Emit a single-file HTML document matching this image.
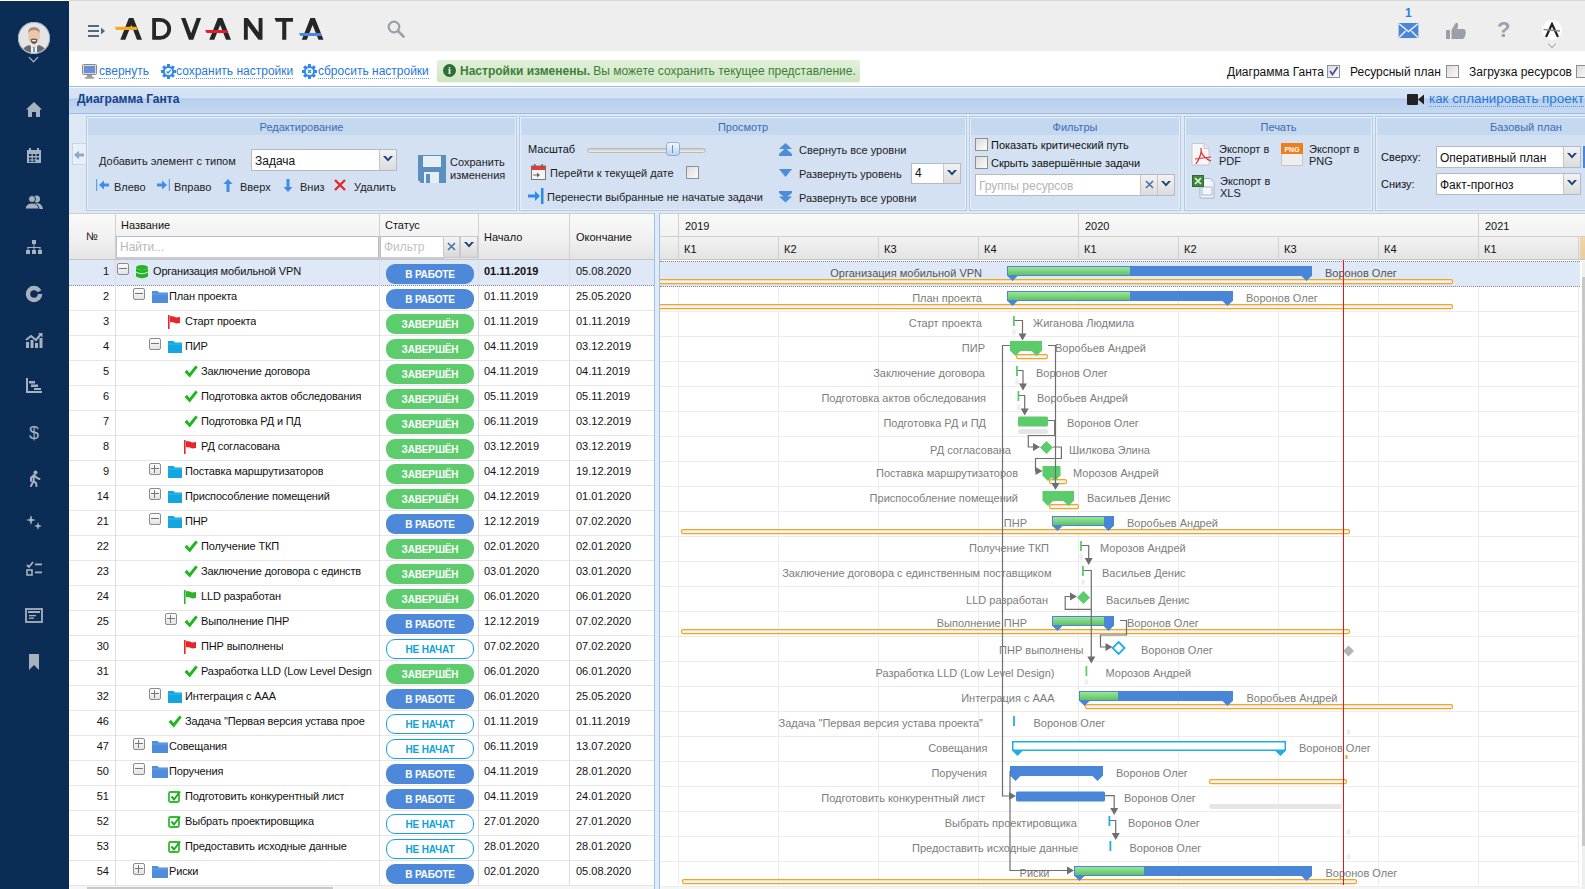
<!DOCTYPE html><html><head><meta charset="utf-8"><style>
*{box-sizing:border-box}
html,body{margin:0;padding:0}
body{width:1585px;height:889px;overflow:hidden;position:relative;background:#fff;font-family:"Liberation Sans",sans-serif;font-size:11px;color:#000}
.a{position:absolute}
.t{position:absolute;white-space:nowrap;line-height:13px}
#sb{left:0;top:1px;width:69px;height:888px;background:#0b2d55}
#hdr{left:69px;top:0;width:1516px;height:51px;background:#eeeeee;border-top:1px solid #d6d6d6}
#lnk{left:69px;top:51px;width:1516px;height:35px;background:#fff}
.lk{color:#1f7ad6;font-size:12px;border-bottom:1px dotted #5b9be0;line-height:13px}
#ttl{left:69px;top:86px;width:1516px;height:28px;border-top:1px solid #99bbe8;border-bottom:1px solid #99bbe8;background:linear-gradient(#f4f8fd 0,#f4f8fd 1px,#d6e4f5 1px,#d3e2f4 11px,#a9c6ec 12px,#b9cfee 13px,#c6d9f0 100%)}
#rib{left:69px;top:114px;width:1516px;height:99px;background:#dfe8f5}
.grp{position:absolute;top:2px;height:95px;border:1px solid #b5c9e3;background:#d3e1f3;box-shadow:inset 0 0 0 1px #e6eef8}
.gh{position:absolute;left:1px;right:1px;top:1px;height:17px;background:#c4d8ef;color:#3d6bb5;text-align:center;line-height:19px;font-size:11px}
.cb{position:absolute;width:13px;height:13px;border:1px solid #8f8f8f;background:linear-gradient(135deg,#dcdcdc,#fbfbfb)}
.sel{position:absolute;background:#fff;border:1px solid #b5b8c8;height:21px}
.dd{position:absolute;right:0;top:0;bottom:0;width:17px;border-left:1px solid #c6c6c6;background:linear-gradient(#f2f2f2,#dcdcdc)}
.dd svg{position:absolute;left:3px;top:6px}
#gh{left:69px;top:213px;width:1516px;height:47px;background:linear-gradient(#fafafa,#e3e3e3);border-top:1px solid #c8c8c8;border-bottom:1px solid #c8c8c8}
.row{position:absolute;left:69px;width:585px;height:25px;border-bottom:1px solid #ececec}
.pill{position:absolute;left:317px;top:4px;width:88px;height:20px;border-radius:9px;color:#fff;font-weight:bold;font-size:10px;text-align:center;line-height:22px;letter-spacing:-0.15px}
.p1{background:#4d88d9}
.p2{background:#5dcc6d}
.p3{background:#fff;border:1.5px solid #14a3dc;color:#119fd8;line-height:19px}
.gtxt{position:absolute;white-space:nowrap;color:#7a7a7a;line-height:13px}
</style></head><body><div id="sb" class="a"><svg class="a" style="left:18px;top:21px" width="32" height="32" viewBox="0 0 32 32"><defs><clipPath id="avc"><circle cx="16" cy="16" r="15"/></clipPath></defs><circle cx="16" cy="16" r="15.5" fill="#dcdcdc" stroke="#a9b6c8" stroke-width="1.5"/><g clip-path="url(#avc)"><rect x="0" y="0" width="32" height="32" fill="#e4e4e4"/><path d="M3 32 Q4 25 11 23 L16 26 L21 23 Q28 25 29 32 Z" fill="#6b6b6b"/><path d="M13 23 L16 27 L19 23 L19 32 L13 32 Z" fill="#f2f2f2"/><rect x="15" y="25" width="2" height="5" fill="#7aa0b8"/><ellipse cx="16" cy="14" rx="6" ry="8" fill="#e8c8aa"/><path d="M10 11 Q10 5 16 5 Q22 5 22 11 Q20 8 16 8 Q12 8 10 11 Z" fill="#a88c78"/><path d="M12.5 17.5 Q16 15.5 19.5 17.5 Q19 21.5 16 22 Q13 21.5 12.5 17.5 Z" fill="#6a5248"/><path d="M13.5 18.3 Q16 17.3 18.5 18.3 Q17.5 19.5 16 19.5 Q14.5 19.5 13.5 18.3 Z" fill="#f4f0ec"/></g></svg><div class="a" style="left:30px;top:53px;width:7px;height:7px;border-right:1.5px solid #c0c8d4;border-bottom:1.5px solid #c0c8d4;transform:rotate(45deg)"></div><svg class="a" style="left:25px;top:100px" width="18" height="18" viewBox="0 0 18 18"><path d="M9 1 L1 8.5 L3 8.5 L3 16 L7 16 L7 11 L11 11 L11 16 L15 16 L15 8.5 L17 8.5 Z" fill="#a7b2c0"/></svg><svg class="a" style="left:25px;top:146px" width="18" height="18" viewBox="0 0 18 18"><rect x="2" y="3" width="14" height="13" fill="#a7b2c0"/><rect x="4" y="1" width="2" height="4" fill="#a7b2c0"/><rect x="12" y="1" width="2" height="4" fill="#a7b2c0"/><g fill="#0b2d55"><rect x="4" y="7" width="2.5" height="2"/><rect x="7.8" y="7" width="2.5" height="2"/><rect x="11.5" y="7" width="2.5" height="2"/><rect x="4" y="10.5" width="2.5" height="2"/><rect x="7.8" y="10.5" width="2.5" height="2"/><rect x="11.5" y="10.5" width="2.5" height="2"/><rect x="4" y="13.5" width="2.5" height="1.5"/><rect x="7.8" y="13.5" width="2.5" height="1.5"/></g></svg><svg class="a" style="left:25px;top:192px" width="18" height="18" viewBox="0 0 18 18"><circle cx="11.5" cy="6" r="3.5" fill="#a7b2c0"/><path d="M5 16 Q6 10 11.5 10 Q17 10 18 16 Z" fill="#a7b2c0"/><circle cx="7" cy="6" r="3.5" fill="#a7b2c0" stroke="#0b2d55" stroke-width="1"/><path d="M0 16 Q1 10 7 10 Q13 10 14 16 Z" fill="#a7b2c0" stroke="#0b2d55" stroke-width="1"/></svg><svg class="a" style="left:25px;top:238px" width="18" height="18" viewBox="0 0 18 18"><rect x="7" y="1" width="4" height="4" fill="#a7b2c0"/><rect x="8.5" y="5" width="1" height="3" fill="#a7b2c0"/><rect x="2.5" y="8" width="13" height="1" fill="#a7b2c0"/><rect x="2.5" y="8" width="1" height="3" fill="#a7b2c0"/><rect x="8.5" y="8" width="1" height="3" fill="#a7b2c0"/><rect x="14.5" y="8" width="1" height="3" fill="#a7b2c0"/><rect x="1" y="11" width="4" height="4" fill="#a7b2c0"/><rect x="7" y="11" width="4" height="4" fill="#a7b2c0"/><rect x="13" y="11" width="4" height="4" fill="#a7b2c0"/></svg><svg class="a" style="left:25px;top:284px" width="18" height="18" viewBox="0 0 18 18"><circle cx="9" cy="9" r="6" fill="none" stroke="#a7b2c0" stroke-width="4.5"/><path d="M9 9 L17 5 L17 9 Z" fill="#0b2d55"/></svg><svg class="a" style="left:25px;top:331px" width="18" height="18" viewBox="0 0 18 18"><rect x="1" y="10" width="3" height="6" fill="#a7b2c0"/><rect x="5.5" y="8" width="3" height="8" fill="#a7b2c0"/><rect x="10" y="11" width="3" height="5" fill="#a7b2c0"/><rect x="14.5" y="6" width="3" height="10" fill="#a7b2c0"/><path d="M1 8 L6 4 L11 8 L16 2" stroke="#a7b2c0" stroke-width="2" fill="none"/><path d="M13 1 L17.5 1 L17.5 5.5 Z" fill="#a7b2c0"/></svg><svg class="a" style="left:25px;top:376px" width="18" height="18" viewBox="0 0 18 18"><rect x="1" y="1" width="2" height="15" fill="#a7b2c0"/><rect x="1" y="14" width="16" height="2" fill="#a7b2c0"/><rect x="4" y="4" width="6" height="2.5" fill="#a7b2c0"/><rect x="6" y="7.5" width="7" height="2.5" fill="#a7b2c0"/><rect x="9" y="11" width="7" height="2" fill="#a7b2c0"/></svg><svg class="a" style="left:25px;top:422px" width="18" height="18" viewBox="0 0 18 18"><text x="9" y="15.5" font-family="Liberation Sans" font-size="18" fill="#a7b2c0" text-anchor="middle">$</text></svg><svg class="a" style="left:25px;top:469px" width="18" height="18" viewBox="0 0 18 18"><circle cx="10.5" cy="2.5" r="2" fill="#a7b2c0"/><path d="M9 5 L6 8 L6 11 M9 5 L12 8 L14.5 9 M9 5 L8.5 11 L6 16 M8.5 11 L11 13 L11.5 16" stroke="#a7b2c0" stroke-width="2" fill="none" stroke-linecap="round"/></svg><svg class="a" style="left:25px;top:513px" width="18" height="18" viewBox="0 0 18 18"><path d="M6 1 L7.3 5 L11 6 L7.3 7 L6 11 L4.7 7 L1 6 L4.7 5 Z" fill="#a7b2c0"/><path d="M13 8 L14 11 L17 12 L14 13 L13 16 L12 13 L9 12 L12 11 Z" fill="#a7b2c0"/></svg><svg class="a" style="left:25px;top:559px" width="18" height="18" viewBox="0 0 18 18"><path d="M2 5 L4 7 L8 2" stroke="#a7b2c0" stroke-width="1.8" fill="none"/><rect x="10" y="3.5" width="7" height="1.8" fill="#a7b2c0"/><rect x="2" y="10" width="5" height="5" fill="none" stroke="#a7b2c0" stroke-width="1.6"/><rect x="10" y="11.5" width="7" height="1.8" fill="#a7b2c0"/></svg><svg class="a" style="left:25px;top:606px" width="18" height="18" viewBox="0 0 18 18"><rect x="1" y="2" width="16" height="13" fill="none" stroke="#a7b2c0" stroke-width="1.8"/><rect x="3" y="4" width="12" height="2" fill="#a7b2c0"/><rect x="4" y="8" width="7" height="1.3" fill="#a7b2c0"/><rect x="4" y="10.5" width="5" height="1.3" fill="#a7b2c0"/></svg><svg class="a" style="left:25px;top:652px" width="18" height="18" viewBox="0 0 18 18"><path d="M4 1 L14 1 L14 17 L9 12 L4 17 Z" fill="#a7b2c0"/></svg></div><div id="hdr" class="a"><svg class="a" style="left:19px;top:23px" width="18" height="15" viewBox="0 0 18 15"><g fill="#4f6a82"><rect x="0" y="1" width="11" height="2"/><rect x="0" y="6" width="11" height="2"/><rect x="0" y="11" width="11" height="2"/><path d="M13 3.5 L17 7 L13 10.5 Z"/></g></svg><svg class="a" style="left:318px;top:19px" width="18" height="18" viewBox="0 0 18 18"><circle cx="7" cy="7" r="5.3" fill="none" stroke="#9aa0a8" stroke-width="2.2"/><path d="M11 11 L16.5 16.5" stroke="#9aa0a8" stroke-width="2.6" stroke-linecap="round"/></svg><div class="t" style="left:1336px;top:6px;color:#2b82d9;font-weight:bold;font-size:12px">1</div><svg class="a" style="left:1329px;top:22px" width="21" height="16" viewBox="0 0 21 17"><rect x="0" y="0" width="21" height="16" fill="#4a86d8"/><path d="M0.5 0.8 L10.5 9 L20.5 0.8" stroke="#eeeeee" stroke-width="1.6" fill="none"/><path d="M0.5 15.5 L7.5 8.5 M20.5 15.5 L13.5 8.5" stroke="#eeeeee" stroke-width="1.6"/></svg><svg class="a" style="left:1377px;top:21px" width="21" height="18" viewBox="0 0 21 18"><g fill="#9aa0aa"><rect x="0" y="8" width="4" height="9" rx="0.5"/><path d="M5.5 8 L9 2 Q10 0 11.5 1 Q12.5 2 12 4.5 L11.2 7 L18 7 Q20 7.5 19.5 9.5 Q20.5 11 19.3 12.3 Q20 14 18.5 15 Q18.8 17 16.5 17 L5.5 17 Z"/></g></svg><div class="t" style="left:1428px;top:18px;color:#9aa0aa;font-weight:bold;font-size:22px;line-height:22px">?</div><div class="a" style="left:1473px;top:19px;width:20px;height:20px;border-radius:50%;background:#fff"></div><svg class="a" style="left:1474px;top:21px" width="18" height="16" viewBox="0 0 18 16"><path d="M3 15 L9 2 L15 15" stroke="#222" stroke-width="2.2" fill="none"/><path d="M0.5 7.5 L17 9" stroke="#888" stroke-width="1.3"/></svg><div class="a" style="left:1480px;top:40px;width:6px;height:6px;border-right:1px solid #aaa;border-bottom:1px solid #aaa;transform:rotate(45deg)"></div></div><svg class="a" style="left:0;top:0" width="340" height="50" viewBox="0 0 340 50"><path d="M120.3,39.7 L128.9,18.0 L133.4,18.0 L142.0,39.7 L137.0,39.7 L131.2,24.9 L125.3,39.7 Z" fill="#262626"/><path d="M209.3,39.7 L217.9,18.0 L222.4,18.0 L231.0,39.7 L226.0,39.7 L220.2,24.9 L214.3,39.7 Z" fill="#262626"/><path d="M301.8,39.7 L310.4,18.0 L314.9,18.0 L323.5,39.7 L318.5,39.7 L312.6,24.9 L306.8,39.7 Z" fill="#262626"/><path d="M152.2,18 L160,18 A10.9,10.9 0 0 1 171.1,28.9 A10.9,10.9 0 0 1 160,39.8 L152.2,39.8 Z M156,21.8 L160,21.8 A7.1,7.1 0 0 1 167.3,28.9 A7.1,7.1 0 0 1 160,36 L156,36 Z" fill="#262626" fill-rule="evenodd"/><path d="M181.0,18.0 L185.4,18.0 L191.1,33.2 L196.7,18.0 L201.1,18.0 L193.3,39.8 L188.9,39.8 Z" fill="#262626"/><path d="M243.9,39.8 L243.9,18.0 L247.9,18.0 L258.6,32.3 L258.6,18.0 L262.5,18.0 L262.5,39.8 L258.5,39.8 L247.8,25.4 L247.8,39.8 Z" fill="#262626"/><path d="M274.5,18.0 L293.0,18.0 L293.0,21.8 L276.0,21.8 Z" fill="#262626"/><path d="M282.2,21.0 L286.3,21.0 L286.3,39.8 L282.2,39.8 Z" fill="#262626"/><path d="M114.9,26.8 L136.6,26.8 L137.3,29.9 L116.2,29.9 Z" fill="#f5ab1b"/><path d="M205.2,30.0 L227.3,30.0 L228.0,32.9 L206.5,32.9 Z" fill="#e8192a"/><path d="M299.0,33.1 L321.0,33.1 L321.8,36.0 L300.3,36.0 Z" fill="#4a88dc"/></svg><div class="a" style="left:69px;top:51px;width:1516px;height:35px;background:#fff"></div><svg class="a" style="left:82px;top:64px" width="15" height="15" viewBox="0 0 15 15"><rect x="0.5" y="0.5" width="14" height="10" rx="1" fill="#d8d8d8" stroke="#8a8a8a"/><rect x="2" y="2" width="11" height="7" fill="#6a8fd8"/><rect x="5" y="11" width="5" height="2" fill="#9a9a9a"/><rect x="3" y="13" width="9" height="1.6" rx="0.8" fill="#b0b0b0" stroke="#8a8a8a" stroke-width="0.5"/></svg><div class="t lk" style="left:99px;top:65px">свернуть</div><svg class="a" style="left:161px;top:64px" width="15" height="15" viewBox="0 0 15 15"><g fill="#2f8ae8"><circle cx="7.5" cy="7.5" r="5.6"/><rect x="6" y="0" width="3" height="3" transform="rotate(0 7.5 7.5)"/><rect x="6" y="0" width="3" height="3" transform="rotate(45 7.5 7.5)"/><rect x="6" y="0" width="3" height="3" transform="rotate(90 7.5 7.5)"/><rect x="6" y="0" width="3" height="3" transform="rotate(135 7.5 7.5)"/><rect x="6" y="0" width="3" height="3" transform="rotate(180 7.5 7.5)"/><rect x="6" y="0" width="3" height="3" transform="rotate(225 7.5 7.5)"/><rect x="6" y="0" width="3" height="3" transform="rotate(270 7.5 7.5)"/><rect x="6" y="0" width="3" height="3" transform="rotate(315 7.5 7.5)"/></g><circle cx="7.5" cy="7.5" r="3.6" fill="#fff"/><path d="M5.5 7.6 L7 9 L9.6 6" stroke="#2f8ae8" stroke-width="1.3" fill="none"/></svg><div class="t lk" style="left:176px;top:65px">сохранить настройки</div><svg class="a" style="left:302px;top:64px" width="15" height="15" viewBox="0 0 15 15"><g fill="#2f8ae8"><circle cx="7.5" cy="7.5" r="5.6"/><rect x="6" y="0" width="3" height="3" transform="rotate(0 7.5 7.5)"/><rect x="6" y="0" width="3" height="3" transform="rotate(45 7.5 7.5)"/><rect x="6" y="0" width="3" height="3" transform="rotate(90 7.5 7.5)"/><rect x="6" y="0" width="3" height="3" transform="rotate(135 7.5 7.5)"/><rect x="6" y="0" width="3" height="3" transform="rotate(180 7.5 7.5)"/><rect x="6" y="0" width="3" height="3" transform="rotate(225 7.5 7.5)"/><rect x="6" y="0" width="3" height="3" transform="rotate(270 7.5 7.5)"/><rect x="6" y="0" width="3" height="3" transform="rotate(315 7.5 7.5)"/></g><circle cx="7.5" cy="7.5" r="3.6" fill="#fff"/><path d="M6 6 L9 9 M9 6 L6 9" stroke="#2f8ae8" stroke-width="1.3"/></svg><div class="t lk" style="left:318px;top:65px">сбросить настройки</div><div class="a" style="left:437px;top:60px;width:423px;height:22px;border-radius:2px;background:linear-gradient(#e2f1da,#cde6c2);box-shadow:0 1px 1px rgba(0,0,0,0.06)"></div><div class="a" style="left:443px;top:64px;width:13px;height:13px;border-radius:50%;background:#2e6e38;color:#fff;font-weight:bold;font-size:10px;line-height:13px;text-align:center;font-family:'Liberation Serif'">i</div><div class="t" style="left:460px;top:65px;font-size:12px;color:#3e7d3a"><b>Настройки изменены.</b> Вы можете сохранить текущее представление.</div><div class="t" style="left:1227px;top:66px;font-size:12px;color:#111">Диаграмма Ганта</div><div class="cb" style="left:1327px;top:65px;background:linear-gradient(135deg,#dcdcdc,#fbfbfb)"></div><svg class="a" style="left:1327px;top:65px" width="13" height="13"><path d="M3 6 L5.5 9.5 L10.5 2" stroke="#3b4aa8" stroke-width="1.6" fill="none"/></svg><div class="t" style="left:1350px;top:66px;font-size:12px;color:#111">Ресурсный план</div><div class="cb" style="left:1446px;top:65px;background:linear-gradient(135deg,#dcdcdc,#fbfbfb)"></div><div class="t" style="left:1469px;top:66px;font-size:12px;color:#111">Загрузка ресурсов</div><div class="cb" style="left:1576px;top:65px;background:linear-gradient(135deg,#dcdcdc,#fbfbfb)"></div><div id="ttl" class="a"></div><div class="t" style="left:77px;top:93px;font-size:12px;font-weight:bold;color:#15428b">Диаграмма Ганта</div><svg class="a" style="left:1407px;top:94px" width="17" height="11" viewBox="0 0 17 11"><rect x="0" y="0" width="11" height="11" rx="1" fill="#222"/><path d="M11 5.5 L17 0.5 L17 10.5 Z" fill="#222"/></svg><div class="t lk" style="left:1429px;top:92px;font-size:13.4px;line-height:14px">как спланировать проект</div><div id="rib" class="a"></div><div class="a" style="left:72px;top:143px;width:14px;height:22px;background:#e8eff8;border:1px solid #c8d6ea;border-right:none"></div><svg class="a" style="left:74px;top:150px" width="10" height="10" viewBox="0 0 10 10"><path d="M0 5 L5 0.5 L5 3.5 L10 3.5 L10 6.5 L5 6.5 L5 9.5 Z" fill="#8fa9cc"/></svg><div class="grp" style="left:86px;top:116px;width:431px;height:95px"><div class="gh">Редактирование</div></div><div class="grp" style="left:519px;top:116px;width:448px;height:95px"><div class="gh">Просмотр</div></div><div class="grp" style="left:969px;top:116px;width:212px;height:95px"><div class="gh">Фильтры</div></div><div class="grp" style="left:1184px;top:116px;width:189px;height:95px"><div class="gh">Печать</div></div><div class="grp" style="left:1375px;top:116px;width:302px;height:95px"><div class="gh">Базовый план</div></div><div class="t" style="left:99px;top:155px;color:#222">Добавить элемент с типом</div><div class="sel" style="left:251px;top:149px;width:146px;height:22px"><div class="t" style="left:3px;top:5px;font-size:12px;color:#111">Задача</div><div class="dd"><svg width="10" height="6" viewBox="0 0 10 6"><path d="M0 0 L2.6 0 L5 2.8 L7.4 0 L10 0 L5 5.6 Z" fill="#1d3f7e"/></svg></div></div><svg class="a" style="left:96px;top:179px" width="14" height="12" viewBox="0 0 14 12"><rect x="0" y="0" width="1.2" height="12" fill="#5fa0e6"/><path d="M3 6 L8 1.5 L8 4.5 L13 4.5 L13 7.5 L8 7.5 L8 10.5 Z" fill="#3d8ee6"/></svg><div class="t" style="left:114px;top:181px;color:#222">Влево</div><svg class="a" style="left:156px;top:179px" width="14" height="12" viewBox="0 0 14 12"><rect x="12.8" y="0" width="1.2" height="12" fill="#5fa0e6"/><path d="M11 6 L6 1.5 L6 4.5 L1 4.5 L1 7.5 L6 7.5 L6 10.5 Z" fill="#3d8ee6"/></svg><div class="t" style="left:174px;top:181px;color:#222">Вправо</div><svg class="a" style="left:223px;top:179px" width="10" height="13" viewBox="0 0 10 13"><path d="M5 0 L9.5 5 L6.5 5 L6.5 13 L3.5 13 L3.5 5 L0.5 5 Z" fill="#3d8ee6"/></svg><div class="t" style="left:240px;top:181px;color:#222">Вверх</div><svg class="a" style="left:283px;top:179px" width="10" height="13" viewBox="0 0 10 13"><path d="M5 13 L9.5 8 L6.5 8 L6.5 0 L3.5 0 L3.5 8 L0.5 8 Z" fill="#3d8ee6"/></svg><div class="t" style="left:300px;top:181px;color:#222">Вниз</div><svg class="a" style="left:334px;top:179px" width="12" height="12" viewBox="0 0 12 12"><path d="M1 1 L11 11 M11 1 L1 11" stroke="#e02a2a" stroke-width="2.4"/></svg><div class="t" style="left:354px;top:181px;color:#222">Удалить</div><svg class="a" style="left:418px;top:155px" width="28" height="28" viewBox="0 0 28 28"><path d="M0 0 L28 0 L28 28 L3 28 L0 25 Z" fill="#5b8fbf"/><rect x="5" y="1" width="18" height="11" fill="#e6eef6"/><rect x="6" y="17" width="15" height="11" fill="#e6eef6"/><rect x="8" y="19" width="4" height="9" fill="#5b8fbf"/></svg><div class="t" style="left:450px;top:156px;color:#222;line-height:12.5px">Сохранить<br>изменения</div><div class="t" style="left:528px;top:143px;color:#111">Масштаб</div><div class="a" style="left:587px;top:148px;width:119px;height:5px;border-radius:3px;background:linear-gradient(#c9c9c9,#eeeeee);border:1px solid #b9b9b9"></div><div class="a" style="left:666px;top:142px;width:14px;height:14px;border-radius:3px;background:linear-gradient(#f4f8fd,#bcd2ee);border:1px solid #8fb0d8"></div><div class="a" style="left:672px;top:145px;width:1px;height:8px;background:#6f8fb8"></div><svg class="a" style="left:531px;top:164px" width="15" height="16" viewBox="0 0 15 16"><rect x="0.5" y="2" width="14" height="13.5" fill="#f5f5f5" stroke="#777" stroke-width="1"/><rect x="0.5" y="2" width="14" height="4" fill="#e23b3b"/><rect x="3" y="0" width="1.5" height="3.5" fill="#666"/><rect x="10.5" y="0" width="1.5" height="3.5" fill="#666"/><path d="M2 10.5 L6 10.5 L6 8.5 L9 11 L6 13.5 L6 11.5 L2 11.5 Z" fill="#666"/></svg><div class="t" style="left:550px;top:167px;color:#222">Перейти к текущей дате</div><div class="cb" style="left:686px;top:166px;background:linear-gradient(135deg,#dcdcdc,#fbfbfb)"></div><svg class="a" style="left:528px;top:188px" width="16" height="16" viewBox="0 0 16 16"><path d="M0 6.5 L7 6.5 L7 3 L12 8 L7 13 L7 9.5 L0 9.5 Z" fill="#2c8ae8"/><rect x="13" y="0" width="2.5" height="16" fill="#2c8ae8"/></svg><div class="t" style="left:547px;top:191px;color:#222">Перенести выбранные не начатые задачи</div><svg class="a" style="left:779px;top:143px" width="13" height="13" viewBox="0 0 13 13"><path d="M6.5 0 L13 6 L0 6 Z M6.5 5 L13 11 L0 11 Z" fill="#4d8ed8"/><rect x="0" y="11" width="13" height="2" fill="#4d8ed8"/></svg><div class="t" style="left:799px;top:144px;color:#222">Свернуть все уровни</div><svg class="a" style="left:779px;top:169px" width="13" height="10" viewBox="0 0 13 10"><path d="M0 0 L13 0 L6.5 8 Z" fill="#4d8ed8"/></svg><div class="t" style="left:799px;top:168px;color:#222">Развернуть уровень</div><div class="sel" style="left:911px;top:163px;width:50px;height:21px"><div class="t" style="left:3px;top:3px;font-size:12px;color:#111">4</div><div class="dd"><svg width="10" height="6" viewBox="0 0 10 6"><path d="M0 0 L2.6 0 L5 2.8 L7.4 0 L10 0 L5 5.6 Z" fill="#1d3f7e"/></svg></div></div><svg class="a" style="left:779px;top:191px" width="13" height="12" viewBox="0 0 13 12"><rect x="0" y="0" width="13" height="2" fill="#4d8ed8"/><path d="M0 2 L13 2 L6.5 7 Z M0 5.5 L13 5.5 L6.5 11.5 Z" fill="#4d8ed8"/></svg><div class="t" style="left:799px;top:192px;color:#222">Развернуть все уровни</div><div class="cb" style="left:975px;top:138px;background:linear-gradient(135deg,#dcdcdc,#fbfbfb)"></div><div class="t" style="left:991px;top:139px;color:#111">Показать критический путь</div><div class="cb" style="left:975px;top:156px;background:linear-gradient(135deg,#dcdcdc,#fbfbfb)"></div><div class="t" style="left:991px;top:157px;color:#111">Скрыть завершённые задачи</div><div class="sel" style="left:975px;top:174px;width:200px;height:22px"><div class="t" style="left:3px;top:5px;font-size:12px;color:#b4b4b4">Группы ресурсов</div><div class="a" style="right:17px;top:0;bottom:0;width:17px;border-left:1px solid #c6c6c6;background:linear-gradient(#f2f2f2,#dcdcdc)"></div><div class="dd"><svg width="10" height="6" viewBox="0 0 10 6"><path d="M0 0 L2.6 0 L5 2.8 L7.4 0 L10 0 L5 5.6 Z" fill="#1d3f7e"/></svg></div></div><svg class="a" style="left:1145px;top:180px" width="9" height="9"><path d="M1 1 L8 8 M8 1 L1 8" stroke="#4a6fa8" stroke-width="1.6"/></svg><svg class="a" style="left:1191px;top:143px" width="22" height="23" viewBox="0 0 22 23"><path d="M1 0.5 L13 0.5 L18 5.5 L18 22 L1 22 Z" fill="#f7f7f7" stroke="#c8c8c8"/><path d="M13 0.5 L13 5.5 L18 5.5" fill="#e6e6e6" stroke="#c8c8c8"/><path d="M10 5 Q11 12 5 21 M10 8 Q12 15 20 18 M4 16 L20 14" stroke="#e03030" stroke-width="1.2" fill="none"/></svg><div class="t" style="left:1219px;top:143px;color:#222;line-height:12px">Экспорт в<br>PDF</div><svg class="a" style="left:1281px;top:143px" width="22" height="23" viewBox="0 0 22 23"><rect x="0.5" y="10" width="21" height="12.5" fill="#eeeeee" stroke="#c8c8c8"/><rect x="0" y="0" width="22" height="11" fill="#f07c1c"/><text x="11" y="8.5" font-family="Liberation Sans" font-size="7" font-weight="bold" fill="#fff" text-anchor="middle">PNG</text></svg><div class="t" style="left:1309px;top:143px;color:#222;line-height:12px">Экспорт в<br>PNG</div><svg class="a" style="left:1192px;top:175px" width="24" height="24" viewBox="0 0 24 24"><path d="M8 3.5 L18 3.5 L22 7.5 L22 23 L8 23 Z" fill="#f4f8fc" stroke="#a0b4cc"/><rect x="10" y="12" width="10" height="8" fill="none" stroke="#8aa6c8" stroke-width="0.8"/><rect x="0.5" y="0.5" width="11" height="11" fill="#3f8a3a" stroke="#2d6b2a"/><path d="M3 3 L9 9 M9 3 L3 9" stroke="#e8f4e0" stroke-width="1.6"/></svg><div class="t" style="left:1220px;top:175px;color:#222;line-height:12px">Экспорт в<br>XLS</div><div class="t" style="left:1381px;top:151px;color:#111">Сверху:</div><div class="sel" style="left:1436px;top:146px;width:145px;height:22px"><div class="t" style="left:3px;top:5px;font-size:12px;color:#111">Оперативный план</div><div class="dd"><svg width="10" height="6" viewBox="0 0 10 6"><path d="M0 0 L2.6 0 L5 2.8 L7.4 0 L10 0 L5 5.6 Z" fill="#1d3f7e"/></svg></div></div><div class="t" style="left:1381px;top:178px;color:#111">Снизу:</div><div class="sel" style="left:1436px;top:173px;width:145px;height:22px"><div class="t" style="left:3px;top:5px;font-size:12px;color:#111">Факт-прогноз</div><div class="dd"><svg width="10" height="6" viewBox="0 0 10 6"><path d="M0 0 L2.6 0 L5 2.8 L7.4 0 L10 0 L5 5.6 Z" fill="#1d3f7e"/></svg></div></div><div class="a" style="left:1583px;top:146px;width:2px;height:22px;background:#4a86d8"></div><div class="a" style="left:69px;top:213px;width:1516px;height:47px;background:linear-gradient(#f9f9f9 0,#f2f2f2 50%,#e4e4e4 100%);border-top:1px solid #cdcdcd;border-bottom:1px solid #c5c5c5"></div><div class="a" style="left:115px;top:214px;width:1px;height:45px;background:#d0d0d0"></div><div class="a" style="left:379px;top:214px;width:1px;height:45px;background:#d0d0d0"></div><div class="a" style="left:478px;top:214px;width:1px;height:45px;background:#d0d0d0"></div><div class="a" style="left:569px;top:214px;width:1px;height:45px;background:#d0d0d0"></div><div class="t" style="left:69px;width:46px;text-align:center;top:230px;color:#111">№</div><div class="t" style="left:121px;top:219px;color:#111">Название</div><div class="a" style="left:116px;top:236px;width:263px;height:23px;background:#fff;border:1px solid #b9bccb;border-bottom:2px solid #c8cad4"></div><div class="t" style="left:120px;top:241px;font-size:12px;color:#b8b8b8">Найти...</div><div class="t" style="left:385px;top:219px;color:#111">Статус</div><div class="a" style="left:380px;top:236px;width:64px;height:23px;background:#fff;border:1px solid #b9bccb;border-bottom:2px solid #c8cad4"></div><div class="t" style="left:384px;top:241px;font-size:12px;color:#c2c2c2">Фильтр</div><div class="a" style="left:443px;top:236px;width:17px;height:22px;background:linear-gradient(#f4f4f4,#d8d8d8);border:1px solid #c9c9c9"></div><svg class="a" style="left:447px;top:242px" width="9" height="9"><path d="M1 1 L8 8 M8 1 L1 8" stroke="#4a6fa8" stroke-width="1.6"/></svg><div class="a" style="left:460px;top:236px;width:18px;height:22px;background:linear-gradient(#f4f4f4,#d8d8d8);border:1px solid #c9c9c9"></div><svg class="a" style="left:464px;top:242px" width="10" height="6" viewBox="0 0 10 6"><path d="M0 0 L2.6 0 L5 2.8 L7.4 0 L10 0 L5 5.6 Z" fill="#1d3f7e"/></svg><div class="t" style="left:484px;top:231px;color:#111">Начало</div><div class="t" style="left:576px;top:231px;color:#111">Окончание</div><div class="a" style="left:654px;top:213px;width:6px;height:676px;background:#e3ebf7;border-left:1.5px solid #9cc0ec;border-right:1.5px solid #9cc0ec"></div><div class="a" style="left:660px;top:236px;width:925px;height:1px;background:#d0d0d0"></div><div class="a" style="left:678px;top:214px;width:1px;height:46px;background:#d0d0d0"></div><div class="a" style="left:1078px;top:214px;width:1px;height:46px;background:#d0d0d0"></div><div class="a" style="left:1478px;top:214px;width:1px;height:46px;background:#d0d0d0"></div><div class="a" style="left:778px;top:237px;width:1px;height:23px;background:#d0d0d0"></div><div class="a" style="left:878px;top:237px;width:1px;height:23px;background:#d0d0d0"></div><div class="a" style="left:978px;top:237px;width:1px;height:23px;background:#d0d0d0"></div><div class="a" style="left:1178px;top:237px;width:1px;height:23px;background:#d0d0d0"></div><div class="a" style="left:1278px;top:237px;width:1px;height:23px;background:#d0d0d0"></div><div class="a" style="left:1378px;top:237px;width:1px;height:23px;background:#d0d0d0"></div><div class="a" style="left:1578px;top:237px;width:1px;height:23px;background:#d0d0d0"></div><div class="t" style="left:685px;top:220px;color:#111">2019</div><div class="t" style="left:1085px;top:220px;color:#111">2020</div><div class="t" style="left:1485px;top:220px;color:#111">2021</div><div class="t" style="left:684px;top:243px;color:#111">К1</div><div class="t" style="left:784px;top:243px;color:#111">К2</div><div class="t" style="left:884px;top:243px;color:#111">К3</div><div class="t" style="left:984px;top:243px;color:#111">К4</div><div class="t" style="left:1084px;top:243px;color:#111">К1</div><div class="t" style="left:1184px;top:243px;color:#111">К2</div><div class="t" style="left:1284px;top:243px;color:#111">К3</div><div class="t" style="left:1384px;top:243px;color:#111">К4</div><div class="t" style="left:1484px;top:243px;color:#111">К1</div><div class="a" style="left:1580px;top:237px;width:5px;height:22px;background:#f0a020;opacity:0.35"></div><div class="a" style="left:69px;top:260px;width:585px;height:26px;background:#dfe8f6;border-bottom:1px dotted #8a8a8a"></div><div class="a" style="left:115px;top:260px;width:1px;height:25px;background:#dcdcdc"></div><div class="a" style="left:379px;top:260px;width:1px;height:25px;background:#dcdcdc"></div><div class="a" style="left:478px;top:260px;width:1px;height:25px;background:#dcdcdc"></div><div class="a" style="left:569px;top:260px;width:1px;height:25px;background:#dcdcdc"></div><div class="t" style="left:69px;width:40px;text-align:right;top:265px;color:#111">1</div><div class="a" style="left:117px;top:263px;width:12px;height:12px;border:1px solid #8c8c8c;border-radius:2px;background:linear-gradient(#fdfdfd,#e4e4e4)"></div><div class="a" style="left:119px;top:268px;width:8px;height:1px;background:#777"></div><svg class="a" style="left:136px;top:265px" width="12" height="14" viewBox="0 0 12 14"><g fill="#22b522"><ellipse cx="6" cy="2.5" rx="6" ry="2.5"/><path d="M0 3.5 Q6 7 12 3.5 L12 6.5 Q6 10 0 6.5 Z"/><path d="M0 7.5 Q6 11 12 7.5 L12 11.5 Q6 15 0 11.5 Z"/></g></svg><div class="t" style="left:153px;top:265px;color:#111;letter-spacing:-0.15px;max-width:222px;overflow:hidden">Организация мобильной VPN</div><div class="pill p1" style="left:386px;top:264px">В РАБОТЕ</div><div class="t" style="left:484px;top:265px;color:#111;font-weight:bold">01.11.2019</div><div class="t" style="left:576px;top:265px;color:#111">05.08.2020</div><div class="a" style="left:69px;top:310px;width:585px;height:1px;background:#e6e6e6"></div><div class="a" style="left:115px;top:285px;width:1px;height:25px;background:#dcdcdc"></div><div class="a" style="left:379px;top:285px;width:1px;height:25px;background:#dcdcdc"></div><div class="a" style="left:478px;top:285px;width:1px;height:25px;background:#dcdcdc"></div><div class="a" style="left:569px;top:285px;width:1px;height:25px;background:#dcdcdc"></div><div class="t" style="left:69px;width:40px;text-align:right;top:290px;color:#111">2</div><div class="a" style="left:133px;top:288px;width:12px;height:12px;border:1px solid #8c8c8c;border-radius:2px;background:linear-gradient(#fdfdfd,#e4e4e4)"></div><div class="a" style="left:135px;top:293px;width:8px;height:1px;background:#777"></div><svg class="a" style="left:152px;top:290px" width="16" height="13" viewBox="0 0 16 13"><path d="M0 1 L5.5 1 L7 2.5 L16 2.5 L16 13 L0 13 Z" fill="#4d8ddc"/><rect x="0" y="3.5" width="16" height="1" fill="#6aa3e6"/></svg><div class="t" style="left:169px;top:290px;color:#111;letter-spacing:-0.15px;max-width:206px;overflow:hidden">План проекта</div><div class="pill p1" style="left:386px;top:289px">В РАБОТЕ</div><div class="t" style="left:484px;top:290px;color:#111;font-weight:normal">01.11.2019</div><div class="t" style="left:576px;top:290px;color:#111">25.05.2020</div><div class="a" style="left:69px;top:335px;width:585px;height:1px;background:#e6e6e6"></div><div class="a" style="left:115px;top:310px;width:1px;height:25px;background:#dcdcdc"></div><div class="a" style="left:379px;top:310px;width:1px;height:25px;background:#dcdcdc"></div><div class="a" style="left:478px;top:310px;width:1px;height:25px;background:#dcdcdc"></div><div class="a" style="left:569px;top:310px;width:1px;height:25px;background:#dcdcdc"></div><div class="t" style="left:69px;width:40px;text-align:right;top:315px;color:#111">3</div><svg class="a" style="left:168px;top:315px" width="13" height="14" viewBox="0 0 13 14"><rect x="0" y="0" width="1.6" height="14" fill="#e8252b"/><path d="M2 1 L6 1.5 L8 2.5 L12 2 L12 8 L8 8.5 L6 7.5 L2 7 Z" fill="#e8252b"/></svg><div class="t" style="left:185px;top:315px;color:#111;letter-spacing:-0.15px;max-width:190px;overflow:hidden">Старт проекта</div><div class="pill p2" style="left:386px;top:314px">ЗАВЕРШЁН</div><div class="t" style="left:484px;top:315px;color:#111;font-weight:normal">01.11.2019</div><div class="t" style="left:576px;top:315px;color:#111">01.11.2019</div><div class="a" style="left:69px;top:360px;width:585px;height:1px;background:#e6e6e6"></div><div class="a" style="left:115px;top:335px;width:1px;height:25px;background:#dcdcdc"></div><div class="a" style="left:379px;top:335px;width:1px;height:25px;background:#dcdcdc"></div><div class="a" style="left:478px;top:335px;width:1px;height:25px;background:#dcdcdc"></div><div class="a" style="left:569px;top:335px;width:1px;height:25px;background:#dcdcdc"></div><div class="t" style="left:69px;width:40px;text-align:right;top:340px;color:#111">4</div><div class="a" style="left:149px;top:338px;width:12px;height:12px;border:1px solid #8c8c8c;border-radius:2px;background:linear-gradient(#fdfdfd,#e4e4e4)"></div><div class="a" style="left:151px;top:343px;width:8px;height:1px;background:#777"></div><svg class="a" style="left:168px;top:340px" width="14" height="13" viewBox="0 0 14 13"><path d="M0 1 L5.5 1 L7 2.5 L14 2.5 L14 13 L0 13 Z" fill="#14a6de"/><rect x="0" y="3.5" width="14" height="1" fill="#3ab8e8"/></svg><div class="t" style="left:185px;top:340px;color:#111;letter-spacing:-0.15px;max-width:190px;overflow:hidden">ПИР</div><div class="pill p2" style="left:386px;top:339px">ЗАВЕРШЁН</div><div class="t" style="left:484px;top:340px;color:#111;font-weight:normal">04.11.2019</div><div class="t" style="left:576px;top:340px;color:#111">03.12.2019</div><div class="a" style="left:69px;top:385px;width:585px;height:1px;background:#e6e6e6"></div><div class="a" style="left:115px;top:360px;width:1px;height:25px;background:#dcdcdc"></div><div class="a" style="left:379px;top:360px;width:1px;height:25px;background:#dcdcdc"></div><div class="a" style="left:478px;top:360px;width:1px;height:25px;background:#dcdcdc"></div><div class="a" style="left:569px;top:360px;width:1px;height:25px;background:#dcdcdc"></div><div class="t" style="left:69px;width:40px;text-align:right;top:365px;color:#111">5</div><svg class="a" style="left:184px;top:365px" width="14" height="13" viewBox="0 0 14 13"><path d="M0.5 7 L3 4.8 L5.5 8 L11.5 0.5 L13.8 2.2 L5.8 12.5 Z" fill="#22b522"/></svg><div class="t" style="left:201px;top:365px;color:#111;letter-spacing:-0.15px;max-width:174px;overflow:hidden">Заключение договора</div><div class="pill p2" style="left:386px;top:364px">ЗАВЕРШЁН</div><div class="t" style="left:484px;top:365px;color:#111;font-weight:normal">04.11.2019</div><div class="t" style="left:576px;top:365px;color:#111">04.11.2019</div><div class="a" style="left:69px;top:410px;width:585px;height:1px;background:#e6e6e6"></div><div class="a" style="left:115px;top:385px;width:1px;height:25px;background:#dcdcdc"></div><div class="a" style="left:379px;top:385px;width:1px;height:25px;background:#dcdcdc"></div><div class="a" style="left:478px;top:385px;width:1px;height:25px;background:#dcdcdc"></div><div class="a" style="left:569px;top:385px;width:1px;height:25px;background:#dcdcdc"></div><div class="t" style="left:69px;width:40px;text-align:right;top:390px;color:#111">6</div><svg class="a" style="left:184px;top:390px" width="14" height="13" viewBox="0 0 14 13"><path d="M0.5 7 L3 4.8 L5.5 8 L11.5 0.5 L13.8 2.2 L5.8 12.5 Z" fill="#22b522"/></svg><div class="t" style="left:201px;top:390px;color:#111;letter-spacing:-0.15px;max-width:174px;overflow:hidden">Подготовка актов обследования</div><div class="pill p2" style="left:386px;top:389px">ЗАВЕРШЁН</div><div class="t" style="left:484px;top:390px;color:#111;font-weight:normal">05.11.2019</div><div class="t" style="left:576px;top:390px;color:#111">05.11.2019</div><div class="a" style="left:69px;top:435px;width:585px;height:1px;background:#e6e6e6"></div><div class="a" style="left:115px;top:410px;width:1px;height:25px;background:#dcdcdc"></div><div class="a" style="left:379px;top:410px;width:1px;height:25px;background:#dcdcdc"></div><div class="a" style="left:478px;top:410px;width:1px;height:25px;background:#dcdcdc"></div><div class="a" style="left:569px;top:410px;width:1px;height:25px;background:#dcdcdc"></div><div class="t" style="left:69px;width:40px;text-align:right;top:415px;color:#111">7</div><svg class="a" style="left:184px;top:415px" width="14" height="13" viewBox="0 0 14 13"><path d="M0.5 7 L3 4.8 L5.5 8 L11.5 0.5 L13.8 2.2 L5.8 12.5 Z" fill="#22b522"/></svg><div class="t" style="left:201px;top:415px;color:#111;letter-spacing:-0.15px;max-width:174px;overflow:hidden">Подготовка РД и ПД</div><div class="pill p2" style="left:386px;top:414px">ЗАВЕРШЁН</div><div class="t" style="left:484px;top:415px;color:#111;font-weight:normal">06.11.2019</div><div class="t" style="left:576px;top:415px;color:#111">03.12.2019</div><div class="a" style="left:69px;top:460px;width:585px;height:1px;background:#e6e6e6"></div><div class="a" style="left:115px;top:435px;width:1px;height:25px;background:#dcdcdc"></div><div class="a" style="left:379px;top:435px;width:1px;height:25px;background:#dcdcdc"></div><div class="a" style="left:478px;top:435px;width:1px;height:25px;background:#dcdcdc"></div><div class="a" style="left:569px;top:435px;width:1px;height:25px;background:#dcdcdc"></div><div class="t" style="left:69px;width:40px;text-align:right;top:440px;color:#111">8</div><svg class="a" style="left:184px;top:440px" width="13" height="14" viewBox="0 0 13 14"><rect x="0" y="0" width="1.6" height="14" fill="#e8252b"/><path d="M2 1 L6 1.5 L8 2.5 L12 2 L12 8 L8 8.5 L6 7.5 L2 7 Z" fill="#e8252b"/></svg><div class="t" style="left:201px;top:440px;color:#111;letter-spacing:-0.15px;max-width:174px;overflow:hidden">РД согласована</div><div class="pill p2" style="left:386px;top:439px">ЗАВЕРШЁН</div><div class="t" style="left:484px;top:440px;color:#111;font-weight:normal">03.12.2019</div><div class="t" style="left:576px;top:440px;color:#111">03.12.2019</div><div class="a" style="left:69px;top:485px;width:585px;height:1px;background:#e6e6e6"></div><div class="a" style="left:115px;top:460px;width:1px;height:25px;background:#dcdcdc"></div><div class="a" style="left:379px;top:460px;width:1px;height:25px;background:#dcdcdc"></div><div class="a" style="left:478px;top:460px;width:1px;height:25px;background:#dcdcdc"></div><div class="a" style="left:569px;top:460px;width:1px;height:25px;background:#dcdcdc"></div><div class="t" style="left:69px;width:40px;text-align:right;top:465px;color:#111">9</div><div class="a" style="left:149px;top:463px;width:12px;height:12px;border:1px solid #8c8c8c;border-radius:2px;background:linear-gradient(#fdfdfd,#e4e4e4)"></div><div class="a" style="left:151px;top:468px;width:8px;height:1px;background:#777"></div><div class="a" style="left:154px;top:465px;width:1px;height:8px;background:#777"></div><svg class="a" style="left:168px;top:465px" width="14" height="13" viewBox="0 0 14 13"><path d="M0 1 L5.5 1 L7 2.5 L14 2.5 L14 13 L0 13 Z" fill="#14a6de"/><rect x="0" y="3.5" width="14" height="1" fill="#3ab8e8"/></svg><div class="t" style="left:185px;top:465px;color:#111;letter-spacing:-0.15px;max-width:190px;overflow:hidden">Поставка маршрутизаторов</div><div class="pill p2" style="left:386px;top:464px">ЗАВЕРШЁН</div><div class="t" style="left:484px;top:465px;color:#111;font-weight:normal">04.12.2019</div><div class="t" style="left:576px;top:465px;color:#111">19.12.2019</div><div class="a" style="left:69px;top:510px;width:585px;height:1px;background:#e6e6e6"></div><div class="a" style="left:115px;top:485px;width:1px;height:25px;background:#dcdcdc"></div><div class="a" style="left:379px;top:485px;width:1px;height:25px;background:#dcdcdc"></div><div class="a" style="left:478px;top:485px;width:1px;height:25px;background:#dcdcdc"></div><div class="a" style="left:569px;top:485px;width:1px;height:25px;background:#dcdcdc"></div><div class="t" style="left:69px;width:40px;text-align:right;top:490px;color:#111">14</div><div class="a" style="left:149px;top:488px;width:12px;height:12px;border:1px solid #8c8c8c;border-radius:2px;background:linear-gradient(#fdfdfd,#e4e4e4)"></div><div class="a" style="left:151px;top:493px;width:8px;height:1px;background:#777"></div><div class="a" style="left:154px;top:490px;width:1px;height:8px;background:#777"></div><svg class="a" style="left:168px;top:490px" width="14" height="13" viewBox="0 0 14 13"><path d="M0 1 L5.5 1 L7 2.5 L14 2.5 L14 13 L0 13 Z" fill="#14a6de"/><rect x="0" y="3.5" width="14" height="1" fill="#3ab8e8"/></svg><div class="t" style="left:185px;top:490px;color:#111;letter-spacing:-0.15px;max-width:190px;overflow:hidden">Приспособление помещений</div><div class="pill p2" style="left:386px;top:489px">ЗАВЕРШЁН</div><div class="t" style="left:484px;top:490px;color:#111;font-weight:normal">04.12.2019</div><div class="t" style="left:576px;top:490px;color:#111">01.01.2020</div><div class="a" style="left:69px;top:535px;width:585px;height:1px;background:#e6e6e6"></div><div class="a" style="left:115px;top:510px;width:1px;height:25px;background:#dcdcdc"></div><div class="a" style="left:379px;top:510px;width:1px;height:25px;background:#dcdcdc"></div><div class="a" style="left:478px;top:510px;width:1px;height:25px;background:#dcdcdc"></div><div class="a" style="left:569px;top:510px;width:1px;height:25px;background:#dcdcdc"></div><div class="t" style="left:69px;width:40px;text-align:right;top:515px;color:#111">21</div><div class="a" style="left:149px;top:513px;width:12px;height:12px;border:1px solid #8c8c8c;border-radius:2px;background:linear-gradient(#fdfdfd,#e4e4e4)"></div><div class="a" style="left:151px;top:518px;width:8px;height:1px;background:#777"></div><svg class="a" style="left:168px;top:515px" width="14" height="13" viewBox="0 0 14 13"><path d="M0 1 L5.5 1 L7 2.5 L14 2.5 L14 13 L0 13 Z" fill="#14a6de"/><rect x="0" y="3.5" width="14" height="1" fill="#3ab8e8"/></svg><div class="t" style="left:185px;top:515px;color:#111;letter-spacing:-0.15px;max-width:190px;overflow:hidden">ПНР</div><div class="pill p1" style="left:386px;top:514px">В РАБОТЕ</div><div class="t" style="left:484px;top:515px;color:#111;font-weight:normal">12.12.2019</div><div class="t" style="left:576px;top:515px;color:#111">07.02.2020</div><div class="a" style="left:69px;top:560px;width:585px;height:1px;background:#e6e6e6"></div><div class="a" style="left:115px;top:535px;width:1px;height:25px;background:#dcdcdc"></div><div class="a" style="left:379px;top:535px;width:1px;height:25px;background:#dcdcdc"></div><div class="a" style="left:478px;top:535px;width:1px;height:25px;background:#dcdcdc"></div><div class="a" style="left:569px;top:535px;width:1px;height:25px;background:#dcdcdc"></div><div class="t" style="left:69px;width:40px;text-align:right;top:540px;color:#111">22</div><svg class="a" style="left:184px;top:540px" width="14" height="13" viewBox="0 0 14 13"><path d="M0.5 7 L3 4.8 L5.5 8 L11.5 0.5 L13.8 2.2 L5.8 12.5 Z" fill="#22b522"/></svg><div class="t" style="left:201px;top:540px;color:#111;letter-spacing:-0.15px;max-width:174px;overflow:hidden">Получение ТКП</div><div class="pill p2" style="left:386px;top:539px">ЗАВЕРШЁН</div><div class="t" style="left:484px;top:540px;color:#111;font-weight:normal">02.01.2020</div><div class="t" style="left:576px;top:540px;color:#111">02.01.2020</div><div class="a" style="left:69px;top:585px;width:585px;height:1px;background:#e6e6e6"></div><div class="a" style="left:115px;top:560px;width:1px;height:25px;background:#dcdcdc"></div><div class="a" style="left:379px;top:560px;width:1px;height:25px;background:#dcdcdc"></div><div class="a" style="left:478px;top:560px;width:1px;height:25px;background:#dcdcdc"></div><div class="a" style="left:569px;top:560px;width:1px;height:25px;background:#dcdcdc"></div><div class="t" style="left:69px;width:40px;text-align:right;top:565px;color:#111">23</div><svg class="a" style="left:184px;top:565px" width="14" height="13" viewBox="0 0 14 13"><path d="M0.5 7 L3 4.8 L5.5 8 L11.5 0.5 L13.8 2.2 L5.8 12.5 Z" fill="#22b522"/></svg><div class="t" style="left:201px;top:565px;color:#111;letter-spacing:-0.15px;max-width:174px;overflow:hidden">Заключение договора с единств</div><div class="pill p2" style="left:386px;top:564px">ЗАВЕРШЁН</div><div class="t" style="left:484px;top:565px;color:#111;font-weight:normal">03.01.2020</div><div class="t" style="left:576px;top:565px;color:#111">03.01.2020</div><div class="a" style="left:69px;top:610px;width:585px;height:1px;background:#e6e6e6"></div><div class="a" style="left:115px;top:585px;width:1px;height:25px;background:#dcdcdc"></div><div class="a" style="left:379px;top:585px;width:1px;height:25px;background:#dcdcdc"></div><div class="a" style="left:478px;top:585px;width:1px;height:25px;background:#dcdcdc"></div><div class="a" style="left:569px;top:585px;width:1px;height:25px;background:#dcdcdc"></div><div class="t" style="left:69px;width:40px;text-align:right;top:590px;color:#111">24</div><svg class="a" style="left:184px;top:590px" width="13" height="14" viewBox="0 0 13 14"><rect x="0" y="0" width="1.6" height="14" fill="#2bb52b"/><path d="M2 1 L6 1.5 L8 2.5 L12 2 L12 8 L8 8.5 L6 7.5 L2 7 Z" fill="#2bb52b"/></svg><div class="t" style="left:201px;top:590px;color:#111;letter-spacing:-0.15px;max-width:174px;overflow:hidden">LLD разработан</div><div class="pill p2" style="left:386px;top:589px">ЗАВЕРШЁН</div><div class="t" style="left:484px;top:590px;color:#111;font-weight:normal">06.01.2020</div><div class="t" style="left:576px;top:590px;color:#111">06.01.2020</div><div class="a" style="left:69px;top:635px;width:585px;height:1px;background:#e6e6e6"></div><div class="a" style="left:115px;top:610px;width:1px;height:25px;background:#dcdcdc"></div><div class="a" style="left:379px;top:610px;width:1px;height:25px;background:#dcdcdc"></div><div class="a" style="left:478px;top:610px;width:1px;height:25px;background:#dcdcdc"></div><div class="a" style="left:569px;top:610px;width:1px;height:25px;background:#dcdcdc"></div><div class="t" style="left:69px;width:40px;text-align:right;top:615px;color:#111">25</div><div class="a" style="left:165px;top:613px;width:12px;height:12px;border:1px solid #8c8c8c;border-radius:2px;background:linear-gradient(#fdfdfd,#e4e4e4)"></div><div class="a" style="left:167px;top:618px;width:8px;height:1px;background:#777"></div><div class="a" style="left:170px;top:615px;width:1px;height:8px;background:#777"></div><svg class="a" style="left:184px;top:615px" width="14" height="13" viewBox="0 0 14 13"><path d="M0.5 7 L3 4.8 L5.5 8 L11.5 0.5 L13.8 2.2 L5.8 12.5 Z" fill="#22b522"/></svg><div class="t" style="left:201px;top:615px;color:#111;letter-spacing:-0.15px;max-width:174px;overflow:hidden">Выполнение ПНР</div><div class="pill p1" style="left:386px;top:614px">В РАБОТЕ</div><div class="t" style="left:484px;top:615px;color:#111;font-weight:normal">12.12.2019</div><div class="t" style="left:576px;top:615px;color:#111">07.02.2020</div><div class="a" style="left:69px;top:660px;width:585px;height:1px;background:#e6e6e6"></div><div class="a" style="left:115px;top:635px;width:1px;height:25px;background:#dcdcdc"></div><div class="a" style="left:379px;top:635px;width:1px;height:25px;background:#dcdcdc"></div><div class="a" style="left:478px;top:635px;width:1px;height:25px;background:#dcdcdc"></div><div class="a" style="left:569px;top:635px;width:1px;height:25px;background:#dcdcdc"></div><div class="t" style="left:69px;width:40px;text-align:right;top:640px;color:#111">30</div><svg class="a" style="left:184px;top:640px" width="13" height="14" viewBox="0 0 13 14"><rect x="0" y="0" width="1.6" height="14" fill="#e8252b"/><path d="M2 1 L6 1.5 L8 2.5 L12 2 L12 8 L8 8.5 L6 7.5 L2 7 Z" fill="#e8252b"/></svg><div class="t" style="left:201px;top:640px;color:#111;letter-spacing:-0.15px;max-width:174px;overflow:hidden">ПНР выполнены</div><div class="pill p3" style="left:386px;top:639px">НЕ НАЧАТ</div><div class="t" style="left:484px;top:640px;color:#111;font-weight:normal">07.02.2020</div><div class="t" style="left:576px;top:640px;color:#111">07.02.2020</div><div class="a" style="left:69px;top:685px;width:585px;height:1px;background:#e6e6e6"></div><div class="a" style="left:115px;top:660px;width:1px;height:25px;background:#dcdcdc"></div><div class="a" style="left:379px;top:660px;width:1px;height:25px;background:#dcdcdc"></div><div class="a" style="left:478px;top:660px;width:1px;height:25px;background:#dcdcdc"></div><div class="a" style="left:569px;top:660px;width:1px;height:25px;background:#dcdcdc"></div><div class="t" style="left:69px;width:40px;text-align:right;top:665px;color:#111">31</div><svg class="a" style="left:184px;top:665px" width="14" height="13" viewBox="0 0 14 13"><path d="M0.5 7 L3 4.8 L5.5 8 L11.5 0.5 L13.8 2.2 L5.8 12.5 Z" fill="#22b522"/></svg><div class="t" style="left:201px;top:665px;color:#111;letter-spacing:-0.15px;max-width:174px;overflow:hidden">Разработка LLD (Low Level Design</div><div class="pill p2" style="left:386px;top:664px">ЗАВЕРШЁН</div><div class="t" style="left:484px;top:665px;color:#111;font-weight:normal">06.01.2020</div><div class="t" style="left:576px;top:665px;color:#111">06.01.2020</div><div class="a" style="left:69px;top:710px;width:585px;height:1px;background:#e6e6e6"></div><div class="a" style="left:115px;top:685px;width:1px;height:25px;background:#dcdcdc"></div><div class="a" style="left:379px;top:685px;width:1px;height:25px;background:#dcdcdc"></div><div class="a" style="left:478px;top:685px;width:1px;height:25px;background:#dcdcdc"></div><div class="a" style="left:569px;top:685px;width:1px;height:25px;background:#dcdcdc"></div><div class="t" style="left:69px;width:40px;text-align:right;top:690px;color:#111">32</div><div class="a" style="left:149px;top:688px;width:12px;height:12px;border:1px solid #8c8c8c;border-radius:2px;background:linear-gradient(#fdfdfd,#e4e4e4)"></div><div class="a" style="left:151px;top:693px;width:8px;height:1px;background:#777"></div><div class="a" style="left:154px;top:690px;width:1px;height:8px;background:#777"></div><svg class="a" style="left:168px;top:690px" width="14" height="13" viewBox="0 0 14 13"><path d="M0 1 L5.5 1 L7 2.5 L14 2.5 L14 13 L0 13 Z" fill="#14a6de"/><rect x="0" y="3.5" width="14" height="1" fill="#3ab8e8"/></svg><div class="t" style="left:185px;top:690px;color:#111;letter-spacing:-0.15px;max-width:190px;overflow:hidden">Интеграция с AAA</div><div class="pill p1" style="left:386px;top:689px">В РАБОТЕ</div><div class="t" style="left:484px;top:690px;color:#111;font-weight:normal">06.01.2020</div><div class="t" style="left:576px;top:690px;color:#111">25.05.2020</div><div class="a" style="left:69px;top:735px;width:585px;height:1px;background:#e6e6e6"></div><div class="a" style="left:115px;top:710px;width:1px;height:25px;background:#dcdcdc"></div><div class="a" style="left:379px;top:710px;width:1px;height:25px;background:#dcdcdc"></div><div class="a" style="left:478px;top:710px;width:1px;height:25px;background:#dcdcdc"></div><div class="a" style="left:569px;top:710px;width:1px;height:25px;background:#dcdcdc"></div><div class="t" style="left:69px;width:40px;text-align:right;top:715px;color:#111">46</div><svg class="a" style="left:168px;top:715px" width="14" height="13" viewBox="0 0 14 13"><path d="M0.5 7 L3 4.8 L5.5 8 L11.5 0.5 L13.8 2.2 L5.8 12.5 Z" fill="#22b522"/></svg><div class="t" style="left:185px;top:715px;color:#111;letter-spacing:-0.15px;max-width:190px;overflow:hidden">Задача &quot;Первая версия устава прое</div><div class="pill p3" style="left:386px;top:714px">НЕ НАЧАТ</div><div class="t" style="left:484px;top:715px;color:#111;font-weight:normal">01.11.2019</div><div class="t" style="left:576px;top:715px;color:#111">01.11.2019</div><div class="a" style="left:69px;top:760px;width:585px;height:1px;background:#e6e6e6"></div><div class="a" style="left:115px;top:735px;width:1px;height:25px;background:#dcdcdc"></div><div class="a" style="left:379px;top:735px;width:1px;height:25px;background:#dcdcdc"></div><div class="a" style="left:478px;top:735px;width:1px;height:25px;background:#dcdcdc"></div><div class="a" style="left:569px;top:735px;width:1px;height:25px;background:#dcdcdc"></div><div class="t" style="left:69px;width:40px;text-align:right;top:740px;color:#111">47</div><div class="a" style="left:133px;top:738px;width:12px;height:12px;border:1px solid #8c8c8c;border-radius:2px;background:linear-gradient(#fdfdfd,#e4e4e4)"></div><div class="a" style="left:135px;top:743px;width:8px;height:1px;background:#777"></div><div class="a" style="left:138px;top:740px;width:1px;height:8px;background:#777"></div><svg class="a" style="left:152px;top:740px" width="16" height="13" viewBox="0 0 16 13"><path d="M0 1 L5.5 1 L7 2.5 L16 2.5 L16 13 L0 13 Z" fill="#4d8ddc"/><rect x="0" y="3.5" width="16" height="1" fill="#6aa3e6"/></svg><div class="t" style="left:169px;top:740px;color:#111;letter-spacing:-0.15px;max-width:206px;overflow:hidden">Совещания</div><div class="pill p3" style="left:386px;top:739px">НЕ НАЧАТ</div><div class="t" style="left:484px;top:740px;color:#111;font-weight:normal">06.11.2019</div><div class="t" style="left:576px;top:740px;color:#111">13.07.2020</div><div class="a" style="left:69px;top:785px;width:585px;height:1px;background:#e6e6e6"></div><div class="a" style="left:115px;top:760px;width:1px;height:25px;background:#dcdcdc"></div><div class="a" style="left:379px;top:760px;width:1px;height:25px;background:#dcdcdc"></div><div class="a" style="left:478px;top:760px;width:1px;height:25px;background:#dcdcdc"></div><div class="a" style="left:569px;top:760px;width:1px;height:25px;background:#dcdcdc"></div><div class="t" style="left:69px;width:40px;text-align:right;top:765px;color:#111">50</div><div class="a" style="left:133px;top:763px;width:12px;height:12px;border:1px solid #8c8c8c;border-radius:2px;background:linear-gradient(#fdfdfd,#e4e4e4)"></div><div class="a" style="left:135px;top:768px;width:8px;height:1px;background:#777"></div><svg class="a" style="left:152px;top:765px" width="16" height="13" viewBox="0 0 16 13"><path d="M0 1 L5.5 1 L7 2.5 L16 2.5 L16 13 L0 13 Z" fill="#4d8ddc"/><rect x="0" y="3.5" width="16" height="1" fill="#6aa3e6"/></svg><div class="t" style="left:169px;top:765px;color:#111;letter-spacing:-0.15px;max-width:206px;overflow:hidden">Поручения</div><div class="pill p1" style="left:386px;top:764px">В РАБОТЕ</div><div class="t" style="left:484px;top:765px;color:#111;font-weight:normal">04.11.2019</div><div class="t" style="left:576px;top:765px;color:#111">28.01.2020</div><div class="a" style="left:69px;top:810px;width:585px;height:1px;background:#e6e6e6"></div><div class="a" style="left:115px;top:785px;width:1px;height:25px;background:#dcdcdc"></div><div class="a" style="left:379px;top:785px;width:1px;height:25px;background:#dcdcdc"></div><div class="a" style="left:478px;top:785px;width:1px;height:25px;background:#dcdcdc"></div><div class="a" style="left:569px;top:785px;width:1px;height:25px;background:#dcdcdc"></div><div class="t" style="left:69px;width:40px;text-align:right;top:790px;color:#111">51</div><svg class="a" style="left:168px;top:790px" width="13" height="13" viewBox="0 0 13 13"><rect x="1" y="2" width="10" height="10" rx="1.5" fill="#fff" stroke="#33bb33" stroke-width="1.8"/><path d="M3.5 6.5 L6 9.5 L12 1.5" stroke="#22aa22" stroke-width="2" fill="none"/></svg><div class="t" style="left:185px;top:790px;color:#111;letter-spacing:-0.15px;max-width:190px;overflow:hidden">Подготовить конкурентный лист</div><div class="pill p1" style="left:386px;top:789px">В РАБОТЕ</div><div class="t" style="left:484px;top:790px;color:#111;font-weight:normal">04.11.2019</div><div class="t" style="left:576px;top:790px;color:#111">24.01.2020</div><div class="a" style="left:69px;top:835px;width:585px;height:1px;background:#e6e6e6"></div><div class="a" style="left:115px;top:810px;width:1px;height:25px;background:#dcdcdc"></div><div class="a" style="left:379px;top:810px;width:1px;height:25px;background:#dcdcdc"></div><div class="a" style="left:478px;top:810px;width:1px;height:25px;background:#dcdcdc"></div><div class="a" style="left:569px;top:810px;width:1px;height:25px;background:#dcdcdc"></div><div class="t" style="left:69px;width:40px;text-align:right;top:815px;color:#111">52</div><svg class="a" style="left:168px;top:815px" width="13" height="13" viewBox="0 0 13 13"><rect x="1" y="2" width="10" height="10" rx="1.5" fill="#fff" stroke="#33bb33" stroke-width="1.8"/><path d="M3.5 6.5 L6 9.5 L12 1.5" stroke="#22aa22" stroke-width="2" fill="none"/></svg><div class="t" style="left:185px;top:815px;color:#111;letter-spacing:-0.15px;max-width:190px;overflow:hidden">Выбрать проектировщика</div><div class="pill p3" style="left:386px;top:814px">НЕ НАЧАТ</div><div class="t" style="left:484px;top:815px;color:#111;font-weight:normal">27.01.2020</div><div class="t" style="left:576px;top:815px;color:#111">27.01.2020</div><div class="a" style="left:69px;top:860px;width:585px;height:1px;background:#e6e6e6"></div><div class="a" style="left:115px;top:835px;width:1px;height:25px;background:#dcdcdc"></div><div class="a" style="left:379px;top:835px;width:1px;height:25px;background:#dcdcdc"></div><div class="a" style="left:478px;top:835px;width:1px;height:25px;background:#dcdcdc"></div><div class="a" style="left:569px;top:835px;width:1px;height:25px;background:#dcdcdc"></div><div class="t" style="left:69px;width:40px;text-align:right;top:840px;color:#111">53</div><svg class="a" style="left:168px;top:840px" width="13" height="13" viewBox="0 0 13 13"><rect x="1" y="2" width="10" height="10" rx="1.5" fill="#fff" stroke="#33bb33" stroke-width="1.8"/><path d="M3.5 6.5 L6 9.5 L12 1.5" stroke="#22aa22" stroke-width="2" fill="none"/></svg><div class="t" style="left:185px;top:840px;color:#111;letter-spacing:-0.15px;max-width:190px;overflow:hidden">Предоставить исходные данные</div><div class="pill p3" style="left:386px;top:839px">НЕ НАЧАТ</div><div class="t" style="left:484px;top:840px;color:#111;font-weight:normal">28.01.2020</div><div class="t" style="left:576px;top:840px;color:#111">28.01.2020</div><div class="a" style="left:69px;top:885px;width:585px;height:1px;background:#e6e6e6"></div><div class="a" style="left:115px;top:860px;width:1px;height:25px;background:#dcdcdc"></div><div class="a" style="left:379px;top:860px;width:1px;height:25px;background:#dcdcdc"></div><div class="a" style="left:478px;top:860px;width:1px;height:25px;background:#dcdcdc"></div><div class="a" style="left:569px;top:860px;width:1px;height:25px;background:#dcdcdc"></div><div class="t" style="left:69px;width:40px;text-align:right;top:865px;color:#111">54</div><div class="a" style="left:133px;top:863px;width:12px;height:12px;border:1px solid #8c8c8c;border-radius:2px;background:linear-gradient(#fdfdfd,#e4e4e4)"></div><div class="a" style="left:135px;top:868px;width:8px;height:1px;background:#777"></div><div class="a" style="left:138px;top:865px;width:1px;height:8px;background:#777"></div><svg class="a" style="left:152px;top:865px" width="16" height="13" viewBox="0 0 16 13"><path d="M0 1 L5.5 1 L7 2.5 L16 2.5 L16 13 L0 13 Z" fill="#4d8ddc"/><rect x="0" y="3.5" width="16" height="1" fill="#6aa3e6"/></svg><div class="t" style="left:169px;top:865px;color:#111;letter-spacing:-0.15px;max-width:206px;overflow:hidden">Риски</div><div class="pill p1" style="left:386px;top:864px">В РАБОТЕ</div><div class="t" style="left:484px;top:865px;color:#111;font-weight:normal">02.01.2020</div><div class="t" style="left:576px;top:865px;color:#111">05.08.2020</div><div class="a" style="left:69px;top:886px;width:585px;height:3px;background:#f6f6f6"></div><div class="a" style="left:87px;top:887px;width:246px;height:2px;background:#c8c8c8"></div><div class="a" style="left:660px;top:261px;width:920px;height:26px;background:#dfe8f6;border-top:1px dotted #8a8a8a;border-bottom:1px dotted #8a8a8a"></div><div class="a" style="left:660px;top:311px;width:920px;height:1px;background:#ececec"></div><div class="a" style="left:660px;top:336px;width:920px;height:1px;background:#ececec"></div><div class="a" style="left:660px;top:361px;width:920px;height:1px;background:#ececec"></div><div class="a" style="left:660px;top:386px;width:920px;height:1px;background:#ececec"></div><div class="a" style="left:660px;top:411px;width:920px;height:1px;background:#ececec"></div><div class="a" style="left:660px;top:436px;width:920px;height:1px;background:#ececec"></div><div class="a" style="left:660px;top:461px;width:920px;height:1px;background:#ececec"></div><div class="a" style="left:660px;top:486px;width:920px;height:1px;background:#ececec"></div><div class="a" style="left:660px;top:511px;width:920px;height:1px;background:#ececec"></div><div class="a" style="left:660px;top:536px;width:920px;height:1px;background:#ececec"></div><div class="a" style="left:660px;top:561px;width:920px;height:1px;background:#ececec"></div><div class="a" style="left:660px;top:586px;width:920px;height:1px;background:#ececec"></div><div class="a" style="left:660px;top:611px;width:920px;height:1px;background:#ececec"></div><div class="a" style="left:660px;top:636px;width:920px;height:1px;background:#ececec"></div><div class="a" style="left:660px;top:661px;width:920px;height:1px;background:#ececec"></div><div class="a" style="left:660px;top:686px;width:920px;height:1px;background:#ececec"></div><div class="a" style="left:660px;top:711px;width:920px;height:1px;background:#ececec"></div><div class="a" style="left:660px;top:736px;width:920px;height:1px;background:#ececec"></div><div class="a" style="left:660px;top:761px;width:920px;height:1px;background:#ececec"></div><div class="a" style="left:660px;top:786px;width:920px;height:1px;background:#ececec"></div><div class="a" style="left:660px;top:811px;width:920px;height:1px;background:#ececec"></div><div class="a" style="left:660px;top:836px;width:920px;height:1px;background:#ececec"></div><div class="a" style="left:660px;top:861px;width:920px;height:1px;background:#ececec"></div><div class="a" style="left:660px;top:886px;width:920px;height:1px;background:#ececec"></div><div class="a" style="left:678px;top:286px;width:1px;height:599px;background:#ececec"></div><div class="a" style="left:678px;top:260px;width:1px;height:1px;background:#ececec"></div><div class="a" style="left:778px;top:286px;width:1px;height:599px;background:#ececec"></div><div class="a" style="left:778px;top:260px;width:1px;height:1px;background:#ececec"></div><div class="a" style="left:878px;top:286px;width:1px;height:599px;background:#ececec"></div><div class="a" style="left:878px;top:260px;width:1px;height:1px;background:#ececec"></div><div class="a" style="left:978px;top:286px;width:1px;height:599px;background:#ececec"></div><div class="a" style="left:978px;top:260px;width:1px;height:1px;background:#ececec"></div><div class="a" style="left:1078px;top:286px;width:1px;height:599px;background:#ececec"></div><div class="a" style="left:1078px;top:260px;width:1px;height:1px;background:#ececec"></div><div class="a" style="left:1178px;top:286px;width:1px;height:599px;background:#ececec"></div><div class="a" style="left:1178px;top:260px;width:1px;height:1px;background:#ececec"></div><div class="a" style="left:1278px;top:286px;width:1px;height:599px;background:#ececec"></div><div class="a" style="left:1278px;top:260px;width:1px;height:1px;background:#ececec"></div><div class="a" style="left:1378px;top:286px;width:1px;height:599px;background:#ececec"></div><div class="a" style="left:1378px;top:260px;width:1px;height:1px;background:#ececec"></div><div class="a" style="left:1478px;top:286px;width:1px;height:599px;background:#ececec"></div><div class="a" style="left:1478px;top:260px;width:1px;height:1px;background:#ececec"></div><div class="a" style="left:1578px;top:286px;width:1px;height:599px;background:#ececec"></div><div class="a" style="left:1578px;top:260px;width:1px;height:1px;background:#ececec"></div><div class="a" style="left:1582px;top:261px;width:3px;height:628px;background:#eef0f0"></div><div class="a" style="left:1582px;top:277px;width:3px;height:569px;background:#c8c8c8"></div><div class="a" style="left:660px;top:887px;width:922px;height:2px;background:#f6f6f6"></div><svg class="a" style="left:0;top:0" width="1585" height="889" viewBox="0 0 1585 889"><defs><linearGradient id="gg" x1="0" y1="0" x2="0" y2="1"><stop offset="0" stop-color="#9ee39c"/><stop offset="1" stop-color="#5cc463"/></linearGradient><clipPath id="gc"><rect x="660" y="260" width="920" height="625"/></clipPath></defs><g clip-path="url(#gc)"><rect x="640.5" y="279.6" width="812" height="4" rx="1.5" fill="#f0f3f8" stroke="#f5a51c" stroke-width="1.2"/><rect x="640.5" y="304.6" width="812" height="4" rx="1.5" fill="#f0f3f8" stroke="#f5a51c" stroke-width="1.2"/><rect x="1016.5" y="354.6" width="31" height="4" rx="1.5" fill="#f0f3f8" stroke="#f5a51c" stroke-width="1.2"/><rect x="1049.5" y="479.6" width="17" height="4" rx="1.5" fill="#f0f3f8" stroke="#f5a51c" stroke-width="1.2"/><rect x="1049.5" y="504.6" width="29" height="4" rx="1.5" fill="#f0f3f8" stroke="#f5a51c" stroke-width="1.2"/><rect x="681.5" y="529.6" width="668" height="4" rx="1.5" fill="#f0f3f8" stroke="#f5a51c" stroke-width="1.2"/><rect x="681.5" y="629.6" width="668" height="4" rx="1.5" fill="#f0f3f8" stroke="#f5a51c" stroke-width="1.2"/><rect x="1085.5" y="704.6" width="367" height="4" rx="1.5" fill="#f0f3f8" stroke="#f5a51c" stroke-width="1.2"/><rect x="1209.5" y="779.6" width="137" height="4" rx="1.5" fill="#f0f3f8" stroke="#f5a51c" stroke-width="1.2"/><rect x="682.5" y="879.6" width="674" height="4" rx="1.5" fill="#f0f3f8" stroke="#f5a51c" stroke-width="1.2"/><rect x="1018" y="429" width="30" height="5" rx="2.5" fill="#e6e6e6"/><rect x="1209" y="804" width="133" height="5" rx="2.5" fill="#e6e6e6"/><rect x="1007" y="266" width="305" height="10" rx="0" fill="#4a86d8" /><rect x="1008" y="267" width="122" height="8" fill="url(#gg)"/><path d="M1007 275.5 L1018 275.5 L1012.5 281 Z M1301 275.5 L1312 275.5 L1306.5 281 Z" fill="#4a86d8"/><rect x="1007" y="291" width="226" height="10" rx="0" fill="#4a86d8" /><rect x="1008" y="292" width="122" height="8" fill="url(#gg)"/><path d="M1007 300.5 L1018 300.5 L1012.5 306 Z M1222 300.5 L1233 300.5 L1227.5 306 Z" fill="#4a86d8"/><rect x="1013.0" y="316" width="1.8" height="10" rx="0" fill="#5ccb6a" /><ellipse cx="1014.0" cy="332" rx="2" ry="3" fill="#efefef"/><rect x="1010" y="341" width="32" height="10" rx="0" fill="#5ccb6a" /><path d="M1010 350.5 L1021 350.5 L1015.5 356 Z M1031 350.5 L1042 350.5 L1036.5 356 Z" fill="#5ccb6a"/><rect x="1016.0" y="366" width="1.8" height="10" rx="0" fill="#5ccb6a" /><ellipse cx="1017.0" cy="382" rx="2" ry="3" fill="#efefef"/><rect x="1017.5" y="391" width="1.8" height="10" rx="0" fill="#5ccb6a" /><ellipse cx="1018.5" cy="407" rx="2" ry="3" fill="#efefef"/><rect x="1018" y="416.5" width="30" height="10" rx="1.5" fill="#5ccb6a" /><path d="M1046.5 441.0 L1053.0 447.5 L1046.5 454.0 L1040.0 447.5 Z" fill="#5ccb6a"/><rect x="1042.5" y="466" width="18.0" height="10" rx="0" fill="#5ccb6a" /><path d="M1042.5 475.5 L1053.5 475.5 L1048.0 481 Z M1049.5 475.5 L1060.5 475.5 L1055.0 481 Z" fill="#5ccb6a"/><rect x="1042.5" y="491" width="31.5" height="10" rx="0" fill="#5ccb6a" /><path d="M1042.5 500.5 L1053.5 500.5 L1048.0 506 Z M1063 500.5 L1074 500.5 L1068.5 506 Z" fill="#5ccb6a"/><rect x="1052" y="516" width="62" height="10" rx="0" fill="#4a86d8" /><rect x="1053" y="517" width="51" height="8" fill="url(#gg)"/><path d="M1052 525.5 L1063 525.5 L1057.5 531 Z M1103 525.5 L1114 525.5 L1108.5 531 Z" fill="#4a86d8"/><rect x="1080.1" y="541" width="1.8" height="10" rx="0" fill="#5ccb6a" /><ellipse cx="1081.1" cy="557" rx="2" ry="3" fill="#efefef"/><rect x="1082.0" y="566" width="1.8" height="10" rx="0" fill="#5ccb6a" /><ellipse cx="1083.0" cy="582" rx="2" ry="3" fill="#efefef"/><path d="M1083.5 591.0 L1090.0 597.5 L1083.5 604.0 L1077.0 597.5 Z" fill="#5ccb6a"/><rect x="1052" y="616" width="62" height="10" rx="0" fill="#4a86d8" /><rect x="1053" y="617" width="51" height="8" fill="url(#gg)"/><path d="M1052 625.5 L1063 625.5 L1057.5 631 Z M1103 625.5 L1114 625.5 L1108.5 631 Z" fill="#4a86d8"/><path d="M1118.6 642 L1124.6 648 L1118.6 654 L1112.6 648 Z" fill="#fff" stroke="#1eaee6" stroke-width="1.8"/><path d="M1348.5 645.5 L1354.0 651 L1348.5 656.5 L1343.0 651 Z" fill="#b4b4b4"/><rect x="1085.5" y="666" width="1.8" height="10" rx="0" fill="#5ccb6a" /><ellipse cx="1086.5" cy="682" rx="2" ry="3" fill="#efefef"/><rect x="1079" y="691" width="154" height="10" rx="0" fill="#4a86d8" /><rect x="1080" y="692" width="38" height="8" fill="url(#gg)"/><path d="M1079 700.5 L1090 700.5 L1084.5 706 Z M1222 700.5 L1233 700.5 L1227.5 706 Z" fill="#4a86d8"/><rect x="1013.1" y="716" width="1.8" height="10" rx="0" fill="#1eaee6" /><ellipse cx="1348.5" cy="732" rx="2" ry="3" fill="#efefef"/><rect x="1012.75" y="741.75" width="272.5" height="8.5" fill="#fff" stroke="#1eaee6" stroke-width="1.5"/><path d="M1012 750.5 L1023 750.5 L1017.5 756 Z M1275 750.5 L1286 750.5 L1280.5 756 Z" fill="#1eaee6"/><rect x="1345.5" y="755" width="2" height="4" rx="0" fill="#f5a51c" /><rect x="1010" y="766" width="93" height="10" rx="0" fill="#4a86d8" /><path d="M1010 775.5 L1021 775.5 L1015.5 781 Z M1092 775.5 L1103 775.5 L1097.5 781 Z" fill="#4a86d8"/><rect x="1016" y="791.5" width="89" height="10" rx="1.5" fill="#4a86d8" /><rect x="1108.5" y="816" width="1.8" height="10" rx="0" fill="#1eaee6" /><ellipse cx="1348.5" cy="832" rx="2" ry="3" fill="#efefef"/><rect x="1109.5" y="841" width="1.8" height="10" rx="0" fill="#1eaee6" /><ellipse cx="1348.5" cy="857" rx="2" ry="3" fill="#efefef"/><rect x="1074" y="866" width="238" height="10" rx="0" fill="#4a86d8" /><rect x="1075" y="867" width="69" height="8" fill="url(#gg)"/><path d="M1074 875.5 L1085 875.5 L1079.5 881 Z M1301 875.5 L1312 875.5 L1306.5 881 Z" fill="#4a86d8"/><path d="M1014.5,320.5 L1022.5,320.5 L1022.5,339" stroke="#6f6f6f" stroke-width="1.2" fill="none"/><path d="M1018.5 333.5 L1026.5 333.5 L1022.5 340.5 Z" fill="#6f6f6f"/><path d="M1010,345.5 L1002.5,345.5 L1002.5,796 L1009,796" stroke="#6f6f6f" stroke-width="1.2" fill="none"/><path d="M1009 792 L1009 800 L1016 796 Z" fill="#6f6f6f"/><path d="M1048,345.5 L1055.5,345.5 L1055.5,484" stroke="#6f6f6f" stroke-width="1.2" fill="none"/><path d="M1051.5 483 L1059.5 483 L1055.5 490 Z" fill="#6f6f6f"/><path d="M1017.5,370.5 L1023,370.5 L1023,389" stroke="#6f6f6f" stroke-width="1.2" fill="none"/><path d="M1019 383.5 L1027 383.5 L1023 390.5 Z" fill="#6f6f6f"/><path d="M1019,395.5 L1024.7,395.5 L1024.7,414" stroke="#6f6f6f" stroke-width="1.2" fill="none"/><path d="M1020.7 408.5 L1028.7 408.5 L1024.7 415.5 Z" fill="#6f6f6f"/><path d="M1048,420.5 L1054.7,420.5 L1054.7,435.5 L1028.3,435.5 L1028.3,447 L1034,447" stroke="#6f6f6f" stroke-width="1.2" fill="none"/><path d="M1033 443 L1033 451 L1040 447 Z" fill="#6f6f6f"/><path d="M1053,447 L1061.4,447 L1061.4,458.5 L1035.5,458.5 L1035.5,471 L1036,471" stroke="#6f6f6f" stroke-width="1.2" fill="none"/><path d="M1035.5 467 L1035.5 475 L1042.5 471 Z" fill="#6f6f6f"/><path d="M1081.6,545.5 L1088.7,545.5 L1088.7,563" stroke="#6f6f6f" stroke-width="1.2" fill="none"/><path d="M1084.7 558 L1092.7 558 L1088.7 565 Z" fill="#6f6f6f"/><path d="M1083.5,570.5 L1091.3,570.5 L1091.3,657" stroke="#6f6f6f" stroke-width="1.2" fill="none"/><path d="M1087.3 656.5 L1095.3 656.5 L1091.3 663.5 Z" fill="#6f6f6f"/><path d="M1091.3,609.4 L1065.2,609.4 L1065.2,596.5 L1070,596.5" stroke="#6f6f6f" stroke-width="1.2" fill="none"/><path d="M1070 592.5 L1070 600.5 L1077 596.5 Z" fill="#6f6f6f"/><path d="M1120,620.5 L1126.5,620.5 L1126.5,635 L1100.5,635 L1100.5,647 L1106,647" stroke="#6f6f6f" stroke-width="1.2" fill="none"/><path d="M1105.5 643 L1105.5 651 L1112.5 647 Z" fill="#6f6f6f"/><path d="M1010,771 L1010,870.5 L1068,870.5" stroke="#6f6f6f" stroke-width="1.2" fill="none"/><path d="M1067 866.5 L1067 874.5 L1074 870.5 Z" fill="#6f6f6f"/><path d="M1105,795.6 L1114.2,795.6 L1114.2,809" stroke="#6f6f6f" stroke-width="1.2" fill="none"/><path d="M1110.2 808 L1118.2 808 L1114.2 815 Z" fill="#6f6f6f"/><path d="M1110,820.5 L1115.7,820.5 L1115.7,834" stroke="#6f6f6f" stroke-width="1.2" fill="none"/><path d="M1111.7 833 L1119.7 833 L1115.7 840 Z" fill="#6f6f6f"/></g></svg><div class="a" style="left:660px;top:260px;width:920px;height:625px;overflow:hidden"><div class="gtxt" style="right:598.0px;top:7px;color:#555">Организация мобильной VPN</div><div class="gtxt" style="left:665.0px;top:7px;color:#555">Воронов Олег</div><div class="gtxt" style="right:598.0px;top:32px;color:#7d7d7d">План проекта</div><div class="gtxt" style="left:586.0px;top:32px;color:#7d7d7d">Воронов Олег</div><div class="gtxt" style="right:598.0px;top:57px;color:#7d7d7d">Старт проекта</div><div class="gtxt" style="left:373.0px;top:57px;color:#7d7d7d">Жиганова Людмила</div><div class="gtxt" style="right:595.0px;top:82px;color:#7d7d7d">ПИР</div><div class="gtxt" style="left:395.0px;top:82px;color:#7d7d7d">Воробьев Андрей</div><div class="gtxt" style="right:595.0px;top:107px;color:#7d7d7d">Заключение договора</div><div class="gtxt" style="left:376.0px;top:107px;color:#7d7d7d">Воронов Олег</div><div class="gtxt" style="right:594.0px;top:132px;color:#7d7d7d">Подготовка актов обследования</div><div class="gtxt" style="left:377.0px;top:132px;color:#7d7d7d">Воробьев Андрей</div><div class="gtxt" style="right:594.0px;top:157px;color:#7d7d7d">Подготовка РД и ПД</div><div class="gtxt" style="left:407.0px;top:157px;color:#7d7d7d">Воронов Олег</div><div class="gtxt" style="right:569.0px;top:184px;color:#7d7d7d">РД согласована</div><div class="gtxt" style="left:409.0px;top:184px;color:#7d7d7d">Шилкова Элина</div><div class="gtxt" style="right:562.0px;top:207px;color:#7d7d7d">Поставка маршрутизаторов</div><div class="gtxt" style="left:413.0px;top:207px;color:#7d7d7d">Морозов Андрей</div><div class="gtxt" style="right:562.0px;top:232px;color:#7d7d7d">Приспособление помещений</div><div class="gtxt" style="left:427.0px;top:232px;color:#7d7d7d">Васильев Денис</div><div class="gtxt" style="right:553.0px;top:257px;color:#7d7d7d">ПНР</div><div class="gtxt" style="left:467.0px;top:257px;color:#7d7d7d">Воробьев Андрей</div><div class="gtxt" style="right:531.0px;top:282px;color:#7d7d7d">Получение ТКП</div><div class="gtxt" style="left:440.0px;top:282px;color:#7d7d7d">Морозов Андрей</div><div class="gtxt" style="right:528.5px;top:307px;color:#7d7d7d">Заключение договора с единственным поставщиком</div><div class="gtxt" style="left:442.0px;top:307px;color:#7d7d7d">Васильев Денис</div><div class="gtxt" style="right:532.0px;top:334px;color:#7d7d7d">LLD разработан</div><div class="gtxt" style="left:446.0px;top:334px;color:#7d7d7d">Васильев Денис</div><div class="gtxt" style="right:553.0px;top:357px;color:#7d7d7d">Выполнение ПНР</div><div class="gtxt" style="left:467.0px;top:357px;color:#7d7d7d">Воронов Олег</div><div class="gtxt" style="right:496.5px;top:384px;color:#7d7d7d">ПНР выполнены</div><div class="gtxt" style="left:481.0px;top:384px;color:#7d7d7d">Воронов Олег</div><div class="gtxt" style="right:525.5px;top:407px;color:#7d7d7d">Разработка LLD (Low Level Design)</div><div class="gtxt" style="left:445.5px;top:407px;color:#7d7d7d">Морозов Андрей</div><div class="gtxt" style="right:525.5px;top:432px;color:#7d7d7d">Интеграция с AAA</div><div class="gtxt" style="left:586.5px;top:432px;color:#7d7d7d">Воробьев Андрей</div><div class="gtxt" style="right:597.0px;top:457px;color:#7d7d7d">Задача "Первая версия устава проекта"</div><div class="gtxt" style="left:373.5px;top:457px;color:#7d7d7d">Воронов Олег</div><div class="gtxt" style="right:592.6px;top:482px;color:#7d7d7d">Совещания</div><div class="gtxt" style="left:639.0px;top:482px;color:#7d7d7d">Воронов Олег</div><div class="gtxt" style="right:593.0px;top:507px;color:#7d7d7d">Поручения</div><div class="gtxt" style="left:456.0px;top:507px;color:#7d7d7d">Воронов Олег</div><div class="gtxt" style="right:595.0px;top:532px;color:#7d7d7d">Подготовить конкурентный лист</div><div class="gtxt" style="left:464.0px;top:532px;color:#7d7d7d">Воронов Олег</div><div class="gtxt" style="right:503.0px;top:557px;color:#7d7d7d">Выбрать проектировщика</div><div class="gtxt" style="left:468.0px;top:557px;color:#7d7d7d">Воронов Олег</div><div class="gtxt" style="right:502.0px;top:582px;color:#7d7d7d">Предоставить исходные данные</div><div class="gtxt" style="left:469.5px;top:582px;color:#7d7d7d">Воронов Олег</div><div class="gtxt" style="right:530.5px;top:607px;color:#7d7d7d">Риски</div><div class="gtxt" style="left:665.5px;top:607px;color:#7d7d7d">Воронов Олег</div></div><div class="a" style="left:1343px;top:260px;width:1px;height:625px;background:#e8131b"></div></body></html>
